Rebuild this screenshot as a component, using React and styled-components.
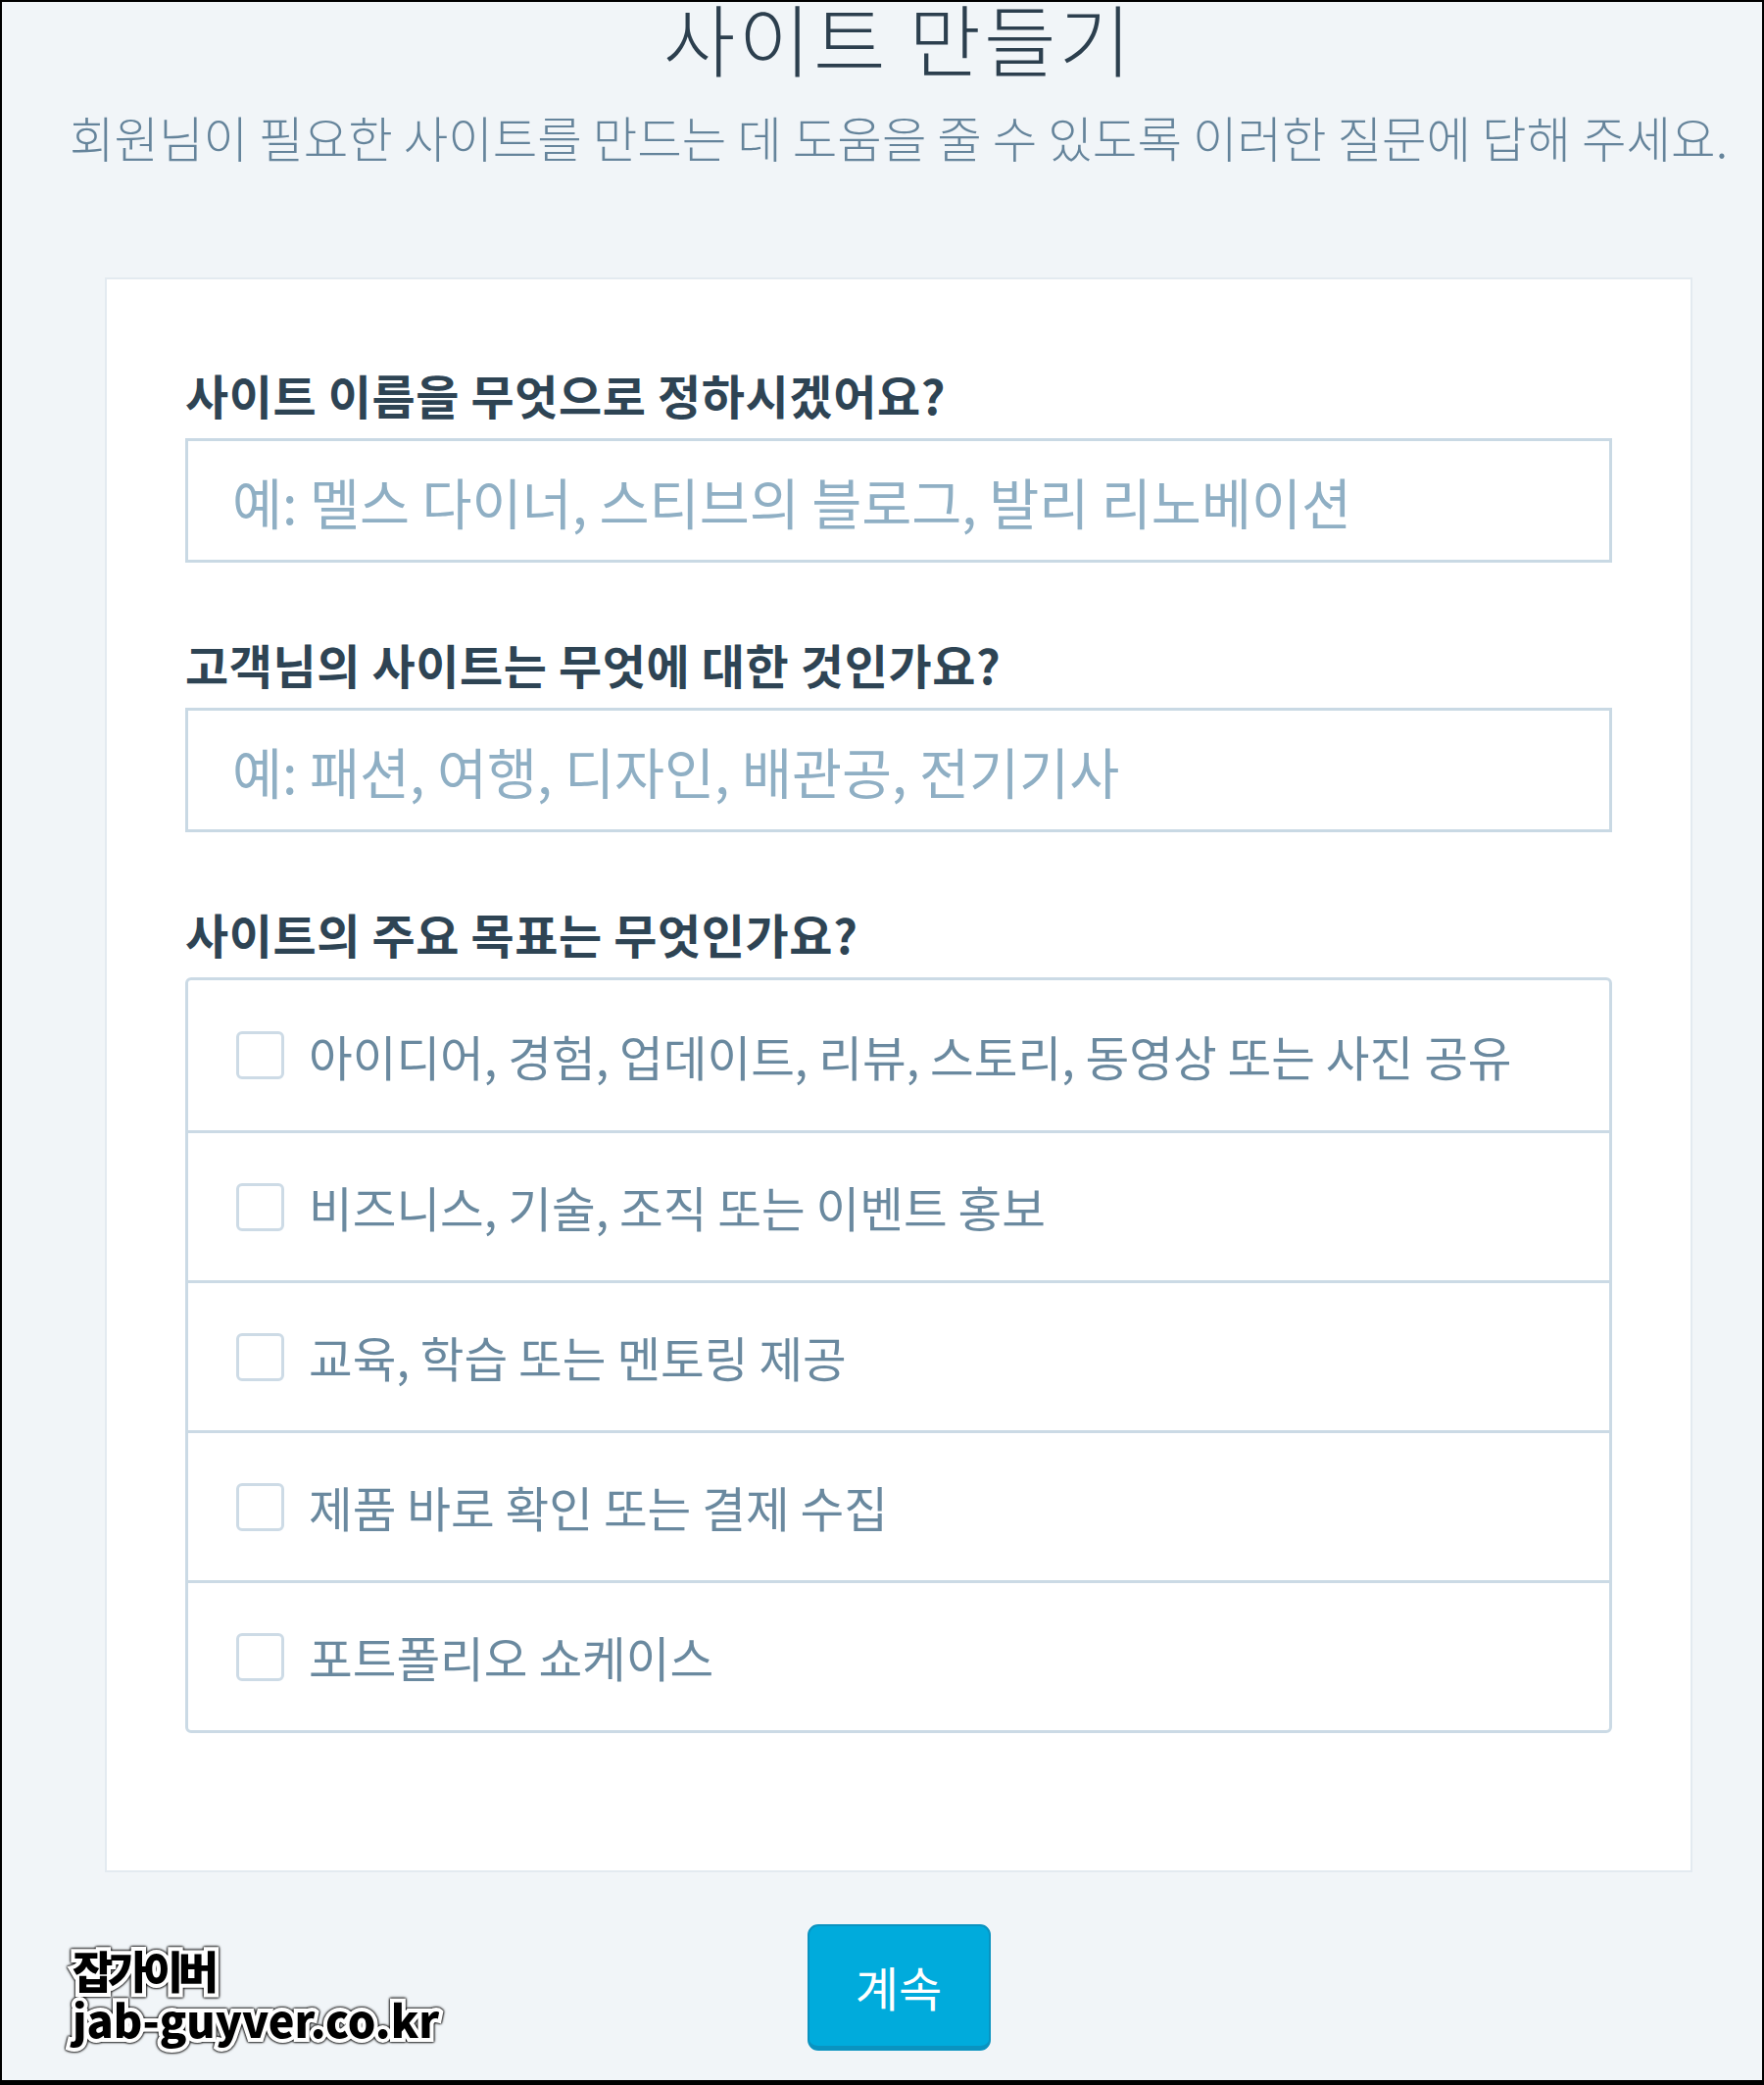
import React from 'react';
import styled, { createGlobalStyle } from 'styled-components';

const GlobalStyle = createGlobalStyle`
  html, body {
    margin: 0;
    padding: 0;
    background: #000;
  }
  * {
    box-sizing: border-box;
  }
`;

const goals = [
  '아이디어, 경험, 업데이트, 리뷰, 스토리, 동영상 또는 사진 공유',
  '비즈니스, 기술, 조직 또는 이벤트 홍보',
  '교육, 학습 또는 멘토링 제공',
  '제품 바로 확인 또는 결제 수집',
  '포트폴리오 쇼케이스',
];

const App = () => {
  return (
    <>
      <GlobalStyle />
      <Page>
        <Column>
          <Title>사이트 만들기</Title>
          <Subtitle>
            회원님이 필요한 사이트를 만드는 데 도움을 줄 수 있도록 이러한 질문에 답해 주세요.
          </Subtitle>

          <Card>
            {/* site name */}
            <Field>
              <Label htmlFor="site-name">사이트 이름을 무엇으로 정하시겠어요?</Label>
              <TextInput
                id="site-name"
                type="text"
                placeholder="예: 멜스 다이너, 스티브의 블로그, 발리 리노베이션"
              />
            </Field>
            {/* site topic */}
            <Field>
              <Label htmlFor="site-topic">고객님의 사이트는 무엇에 대한 것인가요?</Label>
              <TextInput
                id="site-topic"
                type="text"
                placeholder="예: 패션, 여행, 디자인, 배관공, 전기기사"
              />
            </Field>
            {/* goals */}
            <Field>
              <Label as="p">사이트의 주요 목표는 무엇인가요?</Label>
              <GoalList>
                {goals.map((g, index) => {
                  return (
                    <GoalRow key={index}>
                      <Box type="checkbox" />
                      <span>{g}</span>
                    </GoalRow>
                  );
                })}
              </GoalList>
            </Field>
          </Card>

          <ContinueButton type="button">계속</ContinueButton>
        </Column>

        <Watermark>
          <WatermarkLine $spacing={-5.5}>잡가이버</WatermarkLine>
          <WatermarkLine $spacing={0}>jab-guyver.co.kr</WatermarkLine>
        </Watermark>
      </Page>
    </>
  );
};

const Page = styled.div`
  position: relative;
  width: 1800px;
  height: 2127px;
  border: 2px solid #000;
  border-bottom-width: 5px;
  background: #f1f5f8;
  overflow: hidden;
  font-family: 'Noto Sans CJK KR', 'Noto Sans', sans-serif;
`;

const Column = styled.div`
  width: 1620px;
  margin-left: 105px;
  display: flex;
  flex-direction: column;
  align-items: center;
`;

const Title = styled.h1`
  margin: -5px 0 0;
  font-size: 80px;
  line-height: 80px;
  font-weight: 300;
  letter-spacing: 3px;
  color: #2c3f4e;
  white-space: nowrap;
`;

const Subtitle = styled.p`
  margin: 35px 0 0;
  font-size: 49.5px;
  line-height: 56px;
  font-weight: 300;
  color: #65849b;
  white-space: nowrap;
`;

const Card = styled.section`
  align-self: stretch;
  margin-top: 115px;
  padding: 90px 80px 140px;
  background: #fff;
  border: 2px solid #e3eaf0;
  display: flex;
  flex-direction: column;
  gap: 76px;
`;

const Field = styled.div`
  display: flex;
  flex-direction: column;
`;

const Label = styled.label`
  display: block;
  margin: 0 0 18px;
  font-size: 48px;
  line-height: 54px;
  font-weight: 700;
  letter-spacing: 0.6px;
  color: #2e4454;
`;

const TextInput = styled.input`
  height: 127px;
  padding: 0 45px;
  border: 3px solid #c9d9e4;
  border-radius: 0;
  background: #fff;
  font-family: inherit;
  font-size: 55.5px;
  color: #2e4454;
  outline: none;
  &::placeholder {
    color: #8fafc4;
  }
`;

const GoalList = styled.div`
  border: 3px solid #cbdae5;
  border-radius: 6px;
  overflow: hidden;
`;

const GoalRow = styled.label`
  display: flex;
  align-items: center;
  gap: 25px;
  height: 153px;
  padding: 0 0 0 49px;
  font-size: 48.6px;
  color: #6a899f;
  & + & {
    border-top: 3px solid #cbdae5;
  }
`;

const Box = styled.input`
  appearance: none;
  margin: 0;
  flex: none;
  width: 49px;
  height: 49px;
  border: 3px solid #cddbe6;
  border-radius: 6px;
  background: #fff;
`;

const ContinueButton = styled.button`
  margin-top: 53px;
  width: 187px;
  height: 129px;
  border: 2px solid #0a93c0;
  border-bottom-width: 5px;
  border-radius: 11px;
  background: #00abdc;
  color: #fff;
  font-family: inherit;
  font-size: 48px;
  font-weight: 400;
  cursor: pointer;
`;

const Watermark = styled.div`
  position: absolute;
  left: 72px;
  top: 1983px;
  display: flex;
  flex-direction: column;
  font-family: 'Noto Sans CJK KR', sans-serif;
  font-weight: 900;
  font-size: 45px;
  line-height: 50px;
  color: #000;
  -webkit-text-stroke: 8px #fff;
  paint-order: stroke fill;
  filter: drop-shadow(0 0 1px #000) drop-shadow(0 0 1px #000);
`;

const WatermarkLine = styled.span`
  letter-spacing: ${(p) => p.$spacing}px;
  white-space: nowrap;
`;

export default App;
